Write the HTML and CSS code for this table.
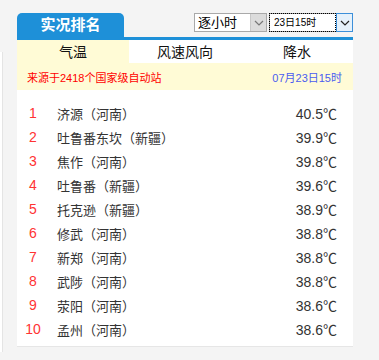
FILE: index.html
```html
<!DOCTYPE html>
<html lang="zh">
<head>
<meta charset="utf-8">
<link rel="stylesheet" href="styles.css">
</head>
<body>
<div class="side"></div>
<div class="wrap">
  <div class="head">
    <div class="title">实况排名</div>
    <div class="selects">
      <div class="sel sel1">
        <span class="sel-text">逐小时</span>
        <span class="sel-btn"><svg width="10" height="6" viewBox="0 0 10 6"><path d="M1 1l4 4 4-4" fill="none" stroke="#777" stroke-width="1.2"/></svg></span>
      </div>
      <div class="sel sel2">
        <span class="sel-text focus">23日15时</span>
        <span class="sel-btn"><svg width="10" height="6" viewBox="0 0 10 6"><path d="M1 1l4 4 4-4" fill="none" stroke="#222" stroke-width="1.2"/></svg></span>
      </div>
    </div>
  </div>
  <div class="panel">
    <div class="tabs">
      <div class="tab active">气温</div>
      <div class="tab">风速风向</div>
      <div class="tab">降水</div>
    </div>
    <div class="info">
      <span class="src">来源于2418个国家级自动站</span>
      <span class="time">07月23日15时</span>
    </div>
    <ul class="list">
      <li><span class="no">1</span><span class="name">济源（河南）</span><span class="val">40.5℃</span></li>
      <li><span class="no">2</span><span class="name">吐鲁番东坎（新疆）</span><span class="val">39.9℃</span></li>
      <li><span class="no">3</span><span class="name">焦作（河南）</span><span class="val">39.8℃</span></li>
      <li><span class="no">4</span><span class="name">吐鲁番（新疆）</span><span class="val">39.6℃</span></li>
      <li><span class="no">5</span><span class="name">托克逊（新疆）</span><span class="val">38.9℃</span></li>
      <li><span class="no">6</span><span class="name">修武（河南）</span><span class="val">38.8℃</span></li>
      <li><span class="no">7</span><span class="name">新郑（河南）</span><span class="val">38.8℃</span></li>
      <li><span class="no">8</span><span class="name">武陟（河南）</span><span class="val">38.8℃</span></li>
      <li><span class="no">9</span><span class="name">荥阳（河南）</span><span class="val">38.6℃</span></li>
      <li><span class="no">10</span><span class="name">孟州（河南）</span><span class="val">38.6℃</span></li>
    </ul>
  </div>
</div>
</body>
</html>
```
FILE: styles.css
```css
html, body {
  margin: 0;
  padding: 0;
  background: #f4f4f4;
  font-family: "Liberation Sans", Arial, "Noto Sans CJK SC", sans-serif;
  color: #333;
}
body {
  display: flex;
  align-items: flex-start;
  height: 360px;
  overflow: hidden;
}
.side {
  width: 2px;
  margin-top: 52px;
  height: 300px;
  background: #fff;
  border-right: 1px solid #e4e4e4;
  flex: none;
}
.wrap {
  width: 336px;
  margin-left: 14px;
  padding-top: 13px;
}
.head {
  display: flex;
  align-items: flex-start;
  height: 24px;
}
.title {
  width: 107px;
  height: 24px;
  background: #1e90d8;
  border-radius: 5px 5px 0 0;
  color: #fff;
  font-weight: bold;
  font-size: 15px;
  line-height: 24px;
  text-align: center;
  letter-spacing: 0;
}
.selects {
  margin-left: auto;
  display: flex;
  gap: 2px;
}
.sel {
  display: flex;
  height: 19px;
  box-sizing: border-box;
  border: 1px solid #a9a9a9;
  background: #fff;
}
.sel1 { width: 73px; }
.sel2 { width: 84px; border-color: #9a9a9a; }
.sel-text {
  flex: 1;
  font-size: 13px;
  line-height: 17px;
  padding-left: 3px;
  color: #000;
  white-space: nowrap;
}
.sel2 .sel-text {
  font-size: 10px;
  line-height: 15px;
  margin: 0 1px 0 0;
  padding-left: 3px;
  outline: 1px dotted #000;
  outline-offset: 0;
  border: 1px solid transparent;
}
.sel-btn {
  width: 15px;
  display: flex;
  align-items: center;
  justify-content: center;
  background: #dcdcdc;
  border-left: 1px solid #c8c8c8;
}
.sel2 .sel-btn {
  width: 15px;
  background: #e5f1fb;
  border: 1px solid #3c8fd9;
  margin: -1px -1px -1px 0;
}
.panel {
  background: #fff;
  border-top: 3px solid #1e90d8;
  border-bottom: 1px solid #e6e6e6;
  height: 306px;
}
.tabs {
  display: grid;
  grid-template-columns: 1fr 1fr 1fr;
  height: 23px;
}
.tab {
  font-family: "Noto Sans CJK SC", sans-serif;
  font-size: 14px;
  line-height: 23px;
  text-align: center;
  color: #111;
}
.tab.active {
  background: #fffbd6;
}
.info {
  display: flex;
  justify-content: space-between;
  align-items: center;
  height: 27px;
  background: #fffbd6;
  padding: 0 11px 0 10px;
  font-size: 11px;
}
.src { color: #f00; }
.time { color: #4a5cf0; }
.list {
  list-style: none;
  margin: 0;
  padding: 11px 0 0 0;
}
.list li {
  display: flex;
  align-items: center;
  height: 24px;
  font-size: 14px;
}
.no {
  width: 32px;
  text-align: center;
  color: #f33;
}
.name {
  margin-left: 8px;
  flex: 1;
  font-family: "Noto Sans CJK SC", sans-serif;
  font-size: 13px;
  color: #333;
}
.val {
  padding-right: 16px;
  color: #333;
}
```
